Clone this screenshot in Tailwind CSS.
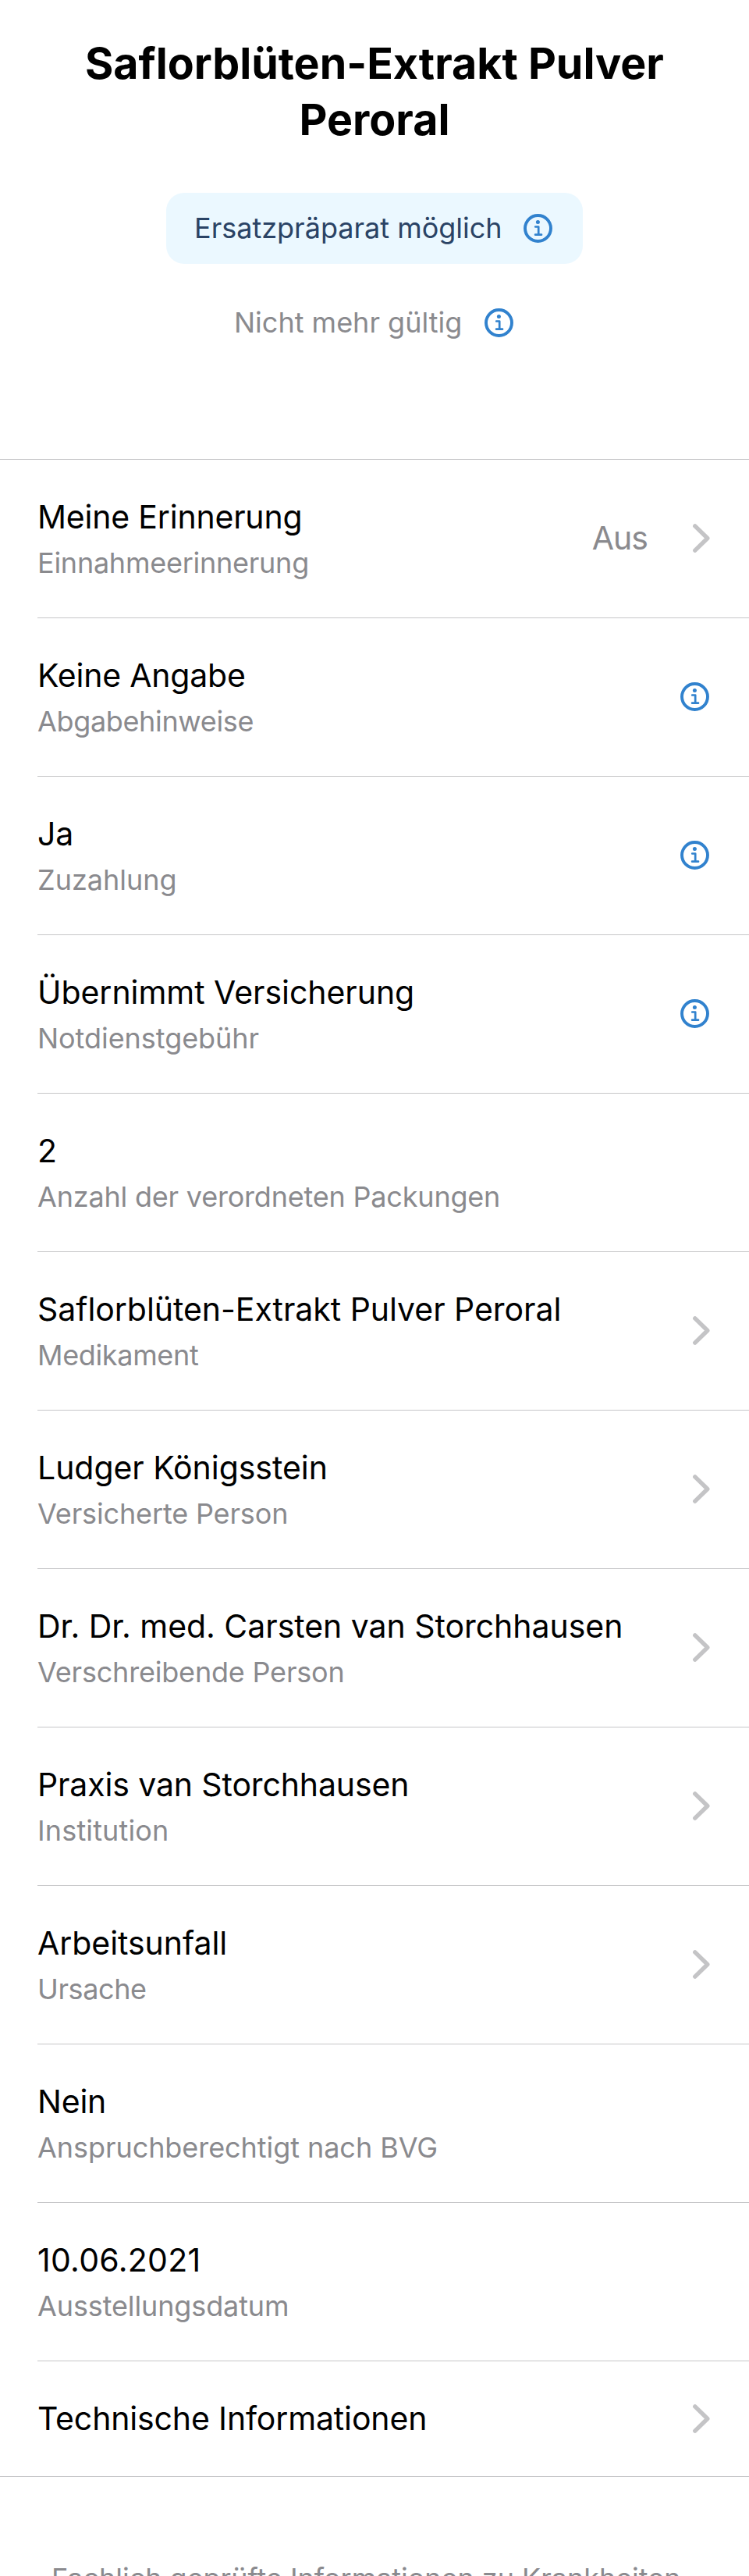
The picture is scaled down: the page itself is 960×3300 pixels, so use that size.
<!DOCTYPE html>
<html lang="de">
<head>
<meta charset="utf-8">
<title>Saflorblüten-Extrakt Pulver Peroral</title>
<script src="https://cdn.jsdelivr.net/npm/@tailwindcss/browser@4"></script>
</head>
<body class="bg-white">
<svg class="hidden">
  <symbol id="info" viewBox="0 0 37 37">
    <circle cx="18.5" cy="18.5" r="16.5" fill="none" stroke="currentColor" stroke-width="3.9"/>
    <circle cx="18.4" cy="10.4" r="2.5" fill="currentColor"/>
    <path d="M15.2 16.5H19.2V26.6M15.1 26.7H23" fill="none" stroke="currentColor" stroke-width="2.7" stroke-linecap="round" stroke-linejoin="round"/>
  </symbol>
  <symbol id="chevron" viewBox="0 0 22 37">
    <path d="M2.8 2.9L18.8 18.5L2.8 34.1" fill="none" stroke="currentColor" stroke-width="5.4" stroke-linecap="round" stroke-linejoin="round"/>
  </symbol>
</svg>
<div class="flex h-[3300px] w-[960px] flex-col overflow-hidden bg-white font-['Inter',sans-serif] text-black">
  <header class="flex flex-col items-center pt-[45px] pb-[153px]">
    <h1 class="w-[800px] text-center text-[55.5px] leading-[72px] font-bold">Saflorblüten-Extrakt Pulver Peroral</h1>
    <div class="mt-[58px] flex h-[91px] w-[534px] items-center justify-between rounded-[23px] bg-[#ebf8ff] pr-[39px] pb-px pl-9">
      <span class="text-[36px] leading-[44px] whitespace-nowrap text-[#2a4365]">Ersatzpräparat möglich</span>
      <svg class="mt-px size-[37px] shrink-0 text-[#3182ce]"><use href="#info"/></svg>
    </div>
    <div class="mt-[53px] mr-[2px] flex h-[44px] w-[358px] items-center justify-between">
      <span class="text-[36px] leading-[44px] whitespace-nowrap text-[#8a8a8e]">Nicht mehr gültig</span>
      <svg class="mt-px size-[37px] shrink-0 text-[#3182ce]"><use href="#info"/></svg>
    </div>
  </header>

  <main class="border-y border-[#c6c6c8] pl-12">
    <div class="flex h-[203px] items-center justify-between border-b border-[#c6c6c8] pr-[50px]">
      <div class="flex flex-col gap-3 whitespace-nowrap">
        <div class="text-[41px] leading-[50px] tracking-[-0.2px]">Meine Erinnerung</div>
        <div class="text-[36px] leading-[44px] tracking-[-0.25px] text-[#8a8a8e]">Einnahmeerinnerung</div>
      </div>
      <div class="flex items-center gap-[58px]">
        <span class="mb-[2px] text-[41px] leading-[50px] tracking-[-1px] text-[#8a8a8e]">Aus</span>
        <svg class="mb-px h-[37px] w-[22px] text-[#c4c4c6]"><use href="#chevron"/></svg>
      </div>
    </div>
    <div class="flex h-[203px] items-center justify-between border-b border-[#c6c6c8] pr-[51px]">
      <div class="flex flex-col gap-3 whitespace-nowrap">
        <div class="text-[41px] leading-[50px] tracking-[-0.2px]">Keine Angabe</div>
        <div class="text-[36px] leading-[44px] tracking-[-0.35px] text-[#8a8a8e]">Abgabehinweise</div>
      </div>
      <svg class="mb-px size-[37px] text-[#3182ce]"><use href="#info"/></svg>
    </div>
    <div class="flex h-[203px] items-center justify-between border-b border-[#c6c6c8] pr-[51px]">
      <div class="flex flex-col gap-3 whitespace-nowrap">
        <div class="text-[41px] leading-[50px] tracking-[-0.05px]">Ja</div>
        <div class="text-[36px] leading-[44px] text-[#8a8a8e]">Zuzahlung</div>
      </div>
      <svg class="mb-px size-[37px] text-[#3182ce]"><use href="#info"/></svg>
    </div>
    <div class="flex h-[203px] items-center justify-between border-b border-[#c6c6c8] pr-[51px]">
      <div class="flex flex-col gap-3 whitespace-nowrap">
        <div class="text-[41px] leading-[50px] tracking-[-0.05px]">Übernimmt Versicherung</div>
        <div class="text-[36px] leading-[44px] tracking-[-0.05px] text-[#8a8a8e]">Notdienstgebühr</div>
      </div>
      <svg class="mb-px size-[37px] text-[#3182ce]"><use href="#info"/></svg>
    </div>
    <div class="flex h-[203px] items-center border-b border-[#c6c6c8]">
      <div class="flex flex-col gap-3 whitespace-nowrap">
        <div class="text-[41px] leading-[50px] tracking-[-0.05px]">2</div>
        <div class="text-[36px] leading-[44px] tracking-[-0.2px] text-[#8a8a8e]">Anzahl der verordneten Packungen</div>
      </div>
    </div>
    <div class="flex h-[203px] items-center justify-between border-b border-[#c6c6c8] pr-[50px]">
      <div class="flex flex-col gap-3 whitespace-nowrap">
        <div class="text-[41px] leading-[50px] tracking-[-0.04px]">Saflorblüten-Extrakt Pulver Peroral</div>
        <div class="text-[36px] leading-[44px] tracking-[-0.35px] text-[#8a8a8e]">Medikament</div>
      </div>
      <svg class="mb-px h-[37px] w-[22px] text-[#c4c4c6]"><use href="#chevron"/></svg>
    </div>
    <div class="flex h-[203px] items-center justify-between border-b border-[#c6c6c8] pr-[50px]">
      <div class="flex flex-col gap-3 whitespace-nowrap">
        <div class="text-[41px] leading-[50px] tracking-[-0.05px]">Ludger Königsstein</div>
        <div class="text-[36px] leading-[44px] tracking-[-0.15px] text-[#8a8a8e]">Versicherte Person</div>
      </div>
      <svg class="mb-px h-[37px] w-[22px] text-[#c4c4c6]"><use href="#chevron"/></svg>
    </div>
    <div class="flex h-[203px] items-center justify-between border-b border-[#c6c6c8] pr-[50px]">
      <div class="flex flex-col gap-3 whitespace-nowrap">
        <div class="text-[41px] leading-[50px] tracking-[-0.04px]">Dr. Dr. med. Carsten van Storchhausen</div>
        <div class="text-[36px] leading-[44px] tracking-[-0.2px] text-[#8a8a8e]">Verschreibende Person</div>
      </div>
      <svg class="mb-px h-[37px] w-[22px] text-[#c4c4c6]"><use href="#chevron"/></svg>
    </div>
    <div class="flex h-[203px] items-center justify-between border-b border-[#c6c6c8] pr-[50px]">
      <div class="flex flex-col gap-3 whitespace-nowrap">
        <div class="text-[41px] leading-[50px] tracking-[-0.13px]">Praxis van Storchhausen</div>
        <div class="text-[36px] leading-[44px] tracking-[0.15px] text-[#8a8a8e]">Institution</div>
      </div>
      <svg class="mb-px h-[37px] w-[22px] text-[#c4c4c6]"><use href="#chevron"/></svg>
    </div>
    <div class="flex h-[203px] items-center justify-between border-b border-[#c6c6c8] pr-[50px]">
      <div class="flex flex-col gap-3 whitespace-nowrap">
        <div class="text-[41px] leading-[50px] tracking-[-0.05px]">Arbeitsunfall</div>
        <div class="text-[36px] leading-[44px] tracking-[-0.4px] text-[#8a8a8e]">Ursache</div>
      </div>
      <svg class="mb-px h-[37px] w-[22px] text-[#c4c4c6]"><use href="#chevron"/></svg>
    </div>
    <div class="flex h-[203px] items-center border-b border-[#c6c6c8]">
      <div class="flex flex-col gap-3 whitespace-nowrap">
        <div class="text-[41px] leading-[50px] tracking-[-0.2px]">Nein</div>
        <div class="text-[36px] leading-[44px] tracking-[-0.06px] text-[#8a8a8e]">Anspruchberechtigt nach BVG</div>
      </div>
    </div>
    <div class="flex h-[203px] items-center border-b border-[#c6c6c8]">
      <div class="flex flex-col gap-3 whitespace-nowrap">
        <div class="text-[41px] leading-[50px] tracking-[0.3px]">10.06.2021</div>
        <div class="text-[36px] leading-[44px] tracking-[-0.12px] text-[#8a8a8e]">Ausstellungsdatum</div>
      </div>
    </div>
    <div class="flex h-[147px] items-center justify-between pr-[50px]">
      <div class="mb-px text-[41px] leading-[50px] tracking-[-0.15px] whitespace-nowrap">Technische Informationen</div>
      <svg class="h-[37px] w-[22px] text-[#c4c4c6]"><use href="#chevron"/></svg>
    </div>
  </main>

  <footer class="mt-[108px] pl-[66px]">
    <p class="text-[36px] leading-[44px] tracking-[-0.03px] whitespace-nowrap text-[#8a8a8e]">Fachlich geprüfte Informationen zu Krankheiten</p>
  </footer>
</div>
</body>
</html>
